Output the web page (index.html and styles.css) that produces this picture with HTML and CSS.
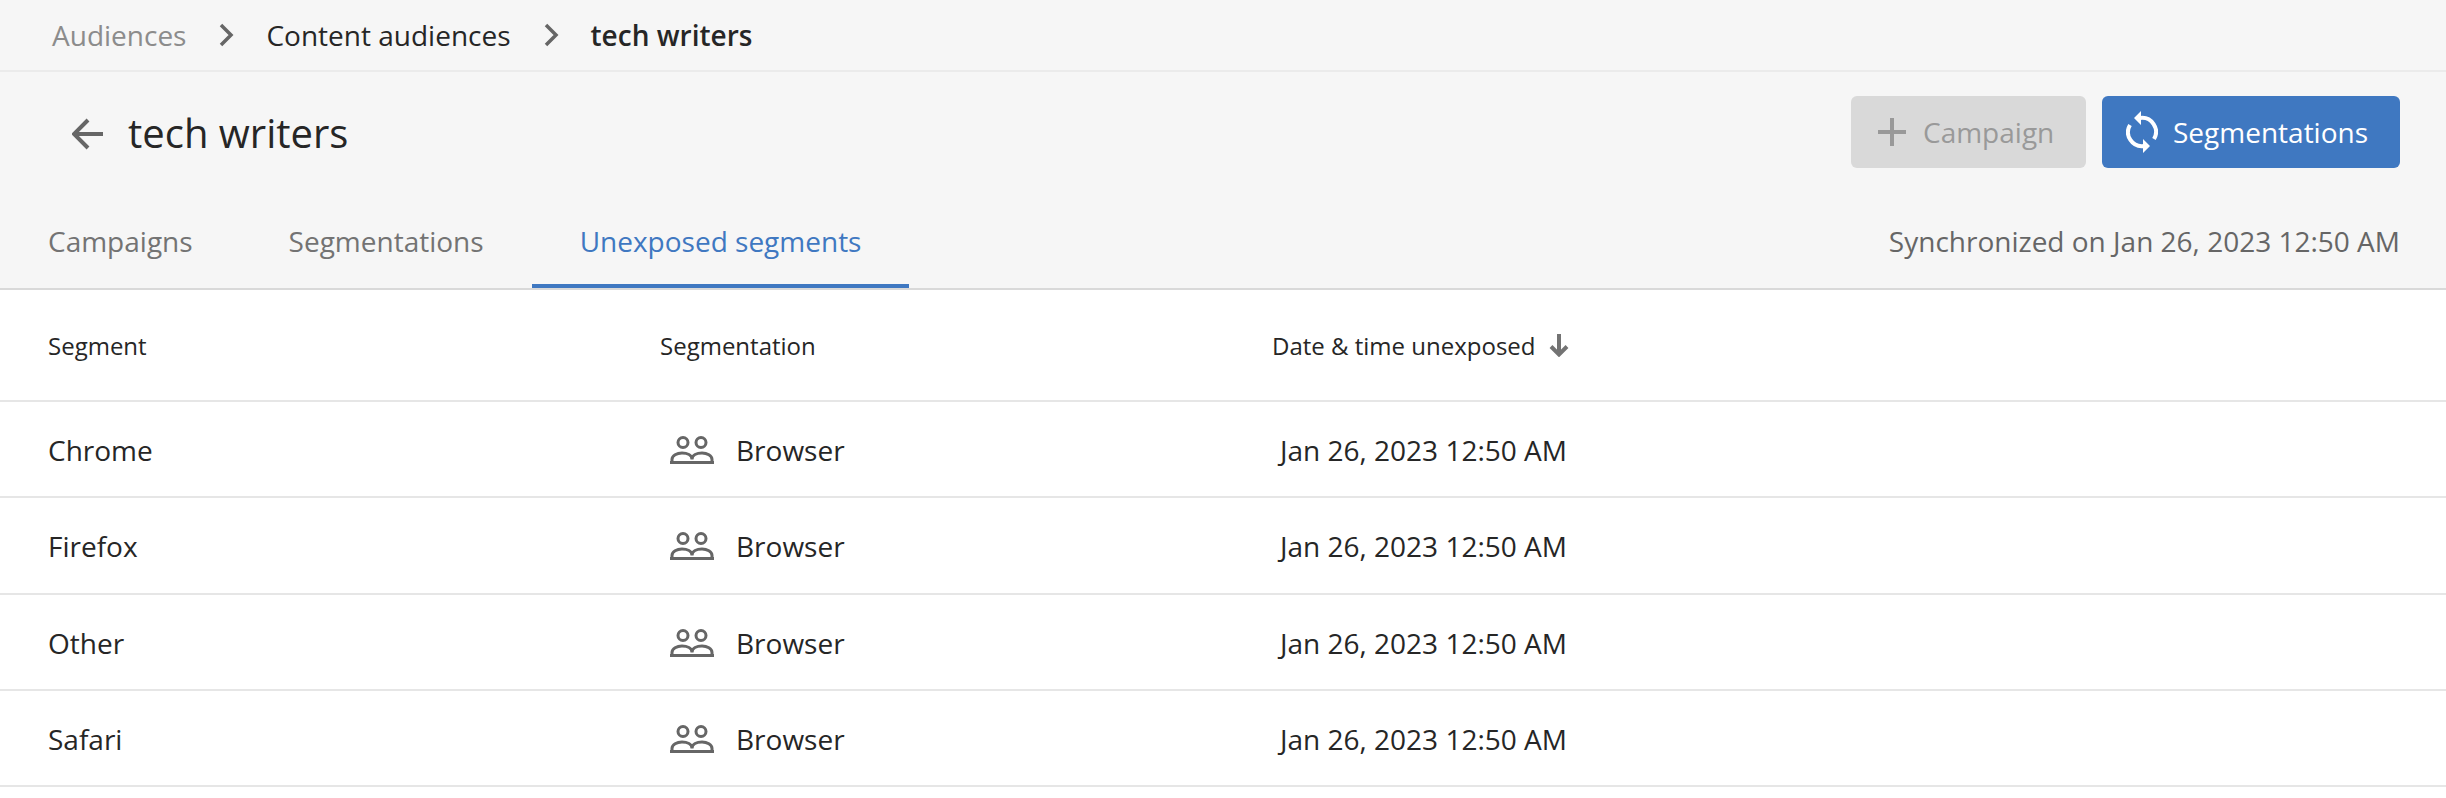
FILE: index.html
```html
<!DOCTYPE html>
<html lang="en">
<head>
<meta charset="utf-8">
<title>tech writers</title>
<link rel="stylesheet" href="styles.css">
</head>
<body>
<header class="head">
  <nav class="crumbs">
    <span class="crumb muted">Audiences</span>
    <svg class="chev" viewBox="0 0 16 24"><path d="M3 2l10 10L3 22"/></svg>
    <span class="crumb">Content audiences</span>
    <svg class="chev" viewBox="0 0 16 24"><path d="M3 2l10 10L3 22"/></svg>
    <span class="crumb strong">tech writers</span>
  </nav>
  <div class="titlebar">
    <div class="title">
      <svg class="back" viewBox="0 0 32 32"><path d="M31 16H3M16 2L2 16l14 14"/></svg>
      <h1>tech writers</h1>
    </div>
    <div class="actions">
      <button class="btn off"><svg class="ic plus" viewBox="0 0 30 30"><path d="M15 1v28M1 15h28"/></svg>Campaign</button>
      <button class="btn on"><svg class="ic sync" viewBox="0 0 32 42"><path class="s" d="M14 7A14 14 0 0 1 28 28M18 35A14 14 0 0 1 4 14"/><path class="f" d="M15 0L8 7l7 7zM17 28l7 7-7 7z"/></svg>Segmentations</button>
    </div>
  </div>
  <div class="tabbar">
    <div class="tabs">
      <a class="tab">Campaigns</a>
      <a class="tab">Segmentations</a>
      <a class="tab active">Unexposed segments</a>
    </div>
    <div class="sync-note">Synchronized on Jan 26, 2023 12:50 AM</div>
  </div>
</header>
<main>
  <div class="row hdr">
    <div class="c1">Segment</div>
    <div class="c2">Segmentation</div>
    <div class="c3">Date &amp; time unexposed <svg class="down" viewBox="0 0 20 23"><path d="M10 0v20M2 12.500l8 8 8-8"/></svg></div>
  </div>
  <div class="row"><div class="c1">Chrome</div><div class="c2 seg"><svg class="ppl" viewBox="0 0 44 28"><circle cx="13" cy="6.500" r="5"/><circle cx="31" cy="6.500" r="5"/><path d="M2 26.500v-3c0-4 5-6.500 10-6.500s10 2 10 6.500c0-4.500 5-6.500 10-6.500s10 2.500 10 6.500v3M0 26.500h44"/></svg><span>Browser</span></div><div class="c4">Jan 26, 2023 12:50 AM</div></div>
  <div class="row"><div class="c1">Firefox</div><div class="c2 seg"><svg class="ppl" viewBox="0 0 44 28"><circle cx="13" cy="6.500" r="5"/><circle cx="31" cy="6.500" r="5"/><path d="M2 26.500v-3c0-4 5-6.500 10-6.500s10 2 10 6.500c0-4.500 5-6.500 10-6.500s10 2.500 10 6.500v3M0 26.500h44"/></svg><span>Browser</span></div><div class="c4">Jan 26, 2023 12:50 AM</div></div>
  <div class="row"><div class="c1">Other</div><div class="c2 seg"><svg class="ppl" viewBox="0 0 44 28"><circle cx="13" cy="6.500" r="5"/><circle cx="31" cy="6.500" r="5"/><path d="M2 26.500v-3c0-4 5-6.500 10-6.500s10 2 10 6.500c0-4.500 5-6.500 10-6.500s10 2.500 10 6.500v3M0 26.500h44"/></svg><span>Browser</span></div><div class="c4">Jan 26, 2023 12:50 AM</div></div>
  <div class="row"><div class="c1">Safari</div><div class="c2 seg"><svg class="ppl" viewBox="0 0 44 28"><circle cx="13" cy="6.500" r="5"/><circle cx="31" cy="6.500" r="5"/><path d="M2 26.500v-3c0-4 5-6.500 10-6.500s10 2 10 6.500c0-4.500 5-6.500 10-6.500s10 2.500 10 6.500v3M0 26.500h44"/></svg><span>Browser</span></div><div class="c4">Jan 26, 2023 12:50 AM</div></div>
</main>
</body>
</html>
```
FILE: styles.css
```css
* { box-sizing: border-box; }
html, body { margin: 0; background: #fff; }
body { font-family: "Open Sans", sans-serif; color: #262626; height: 798px; overflow: hidden; }
.head { background: #f6f6f6; border-bottom: 2px solid #d9d9d9; }
.crumbs { height: 72px; display: flex; align-items: center; padding-left: 52px; border-bottom: 2px solid #ebebeb; font-size: 28px; }
.crumb.muted { color: #8c8c8c; }
.crumb.strong { font-weight: 600; }
.chev { width: 16px; height: 24px; margin: 0 32px; fill: none; stroke: #666; stroke-width: 3.500; flex: none; }
.titlebar { height: 126px; display: flex; align-items: center; justify-content: space-between; padding: 0 46px 6px 72px; }
.title { display: flex; align-items: center; }
.back { width: 32px; height: 32px; fill: none; stroke: #666; stroke-width: 4; margin-right: 24px; margin-top: 4px; }
h1 { margin: 0; font-size: 40px; font-weight: 400; }
.actions { display: flex; gap: 16px; }
.btn { height: 72px; border: 0; border-radius: 6px; display: flex; align-items: center; font: 400 28px "Open Sans", sans-serif; padding: 0; }
.off { width: 235px; background: #d9d9d9; color: #999; padding-left: 26px; }
.on { width: 298px; background: #3f78c1; color: #fff; padding-left: 24px; }
.ic { flex: none; }
.plus { width: 30px; height: 30px; fill: none; stroke: #999; stroke-width: 4; margin-right: 16px; }
.sync { width: 32px; height: 42px; margin-right: 15px; }
.sync .s { fill: none; stroke: #fff; stroke-width: 4; }
.sync .f { fill: #fff; }
.tabbar { height: 90px; display: flex; justify-content: space-between; align-items: stretch; padding-right: 46px; }
.tabs { display: flex; }
.tab { padding: 0 48px; display: flex; align-items: center; font-size: 28px; color: #737373; border-bottom: 4px solid transparent; }
.tab.active { color: #3f78c1; border-bottom-color: #3f78c1; }
.sync-note { font-size: 28px; color: #666; display: flex; align-items: center; padding-bottom: 4px; }
.row { display: flex; align-items: center; height: 96.25px; padding-top: 2px; border-bottom: 2px solid #e6e6e6; font-size: 28px; }
.hdr { height: 112px; padding-top: 0; font-size: 24px; }
.c1 { width: 660px; padding-left: 48px; flex: none; }
.c2 { width: 612px; flex: none; }
.seg { display: flex; align-items: center; padding-left: 10px; }
.c3 { display: flex; align-items: center; gap: 14px; }
.c4 { padding-left: 8px; }
.ppl { width: 44px; height: 28px; fill: none; stroke: #666; stroke-width: 3; margin-right: 22px; }
.down { width: 20px; height: 23px; fill: none; stroke: #737373; stroke-width: 4; }
```
